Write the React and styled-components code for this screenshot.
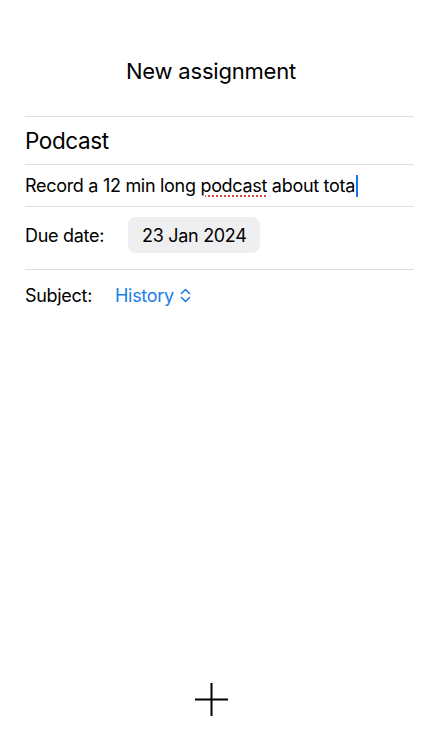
import styled, { createGlobalStyle } from "styled-components";

const GlobalStyle = createGlobalStyle`
    html, body {
        margin: 0;
        padding: 0;
        background: #ffffff;
    }
    body {
        font-family: Inter, "Liberation Sans", sans-serif;
        color: #000000;
    }
`;

const Page = styled.div`
    display: flex;
    flex-direction: column;
    height: 100vh;
    box-sizing: border-box;
`;

const Title = styled.h1`
    margin: 0;
    padding-top: 56px;
    padding-bottom: 30px;
    font-size: 22px;
    line-height: 30px;
    font-weight: 400;
    text-align: center;
    letter-spacing: -0.2px;
`;

const Form = styled.div`
    display: flex;
    flex-direction: column;
    margin: 0 8px 0 25px;
`;

const Divider = styled.div`
    height: 1px;
    background: #dedee0;
`;

const Row = styled.div`
    display: flex;
    align-items: center;
    min-height: ${(props) => props.height}px;
    padding: ${(props) => props.pad || "0"};
    box-sizing: border-box;
    font-size: ${(props) => props.size || 18}px;
    letter-spacing: ${(props) => props.spacing || "-0.3px"};
`;

const Label = styled.span`
    width: ${(props) => props.width}px;
    flex-shrink: 0;
`;

const Misspelled = styled.span`
    text-decoration: underline dotted #e0443a;
    text-decoration-thickness: 2px;
    text-underline-offset: 4px;
`;

const Caret = styled.span`
    display: inline-block;
    width: 2px;
    height: 22px;
    background: #1a73e8;
    vertical-align: -5px;
    margin-left: 1px;
`;

const DatePill = styled.span`
    display: inline-flex;
    align-items: center;
    height: 36px;
    padding: 0 13px 0 14px;
    border-radius: 8px;
    background: #efeff1;
`;

const Picker = styled.span`
    display: inline-flex;
    align-items: center;
    gap: 6px;
    color: #1a7ee6;
`;

const Footer = styled.div`
    margin-top: auto;
    display: flex;
    justify-content: center;
    padding-bottom: 34px;
`;

const AddButton = styled.button`
    border: none;
    background: none;
    padding: 0;
    width: 33px;
    height: 33px;
    cursor: pointer;
`;

const App = () => {
    return (
        <>
            <GlobalStyle />
            <Page>
                <Title>New assignment</Title>
                <Form>
                    <Divider />
                    <Row height={47} size={22.5} spacing="-0.4px">Podcast</Row>
                    <Divider />
                    <Row height={41}>
                        <span>
                            Record a 12 min long <Misspelled>podcast</Misspelled> about tota<Caret />
                        </span>
                    </Row>
                    <Divider />
                    <Row height={62} pad="10px 0 16px">
                        <Label width={103}>Due date:</Label>
                        <DatePill>23 Jan 2024</DatePill>
                    </Row>
                    <Divider />
                    <Row height={50}>
                        <Label width={90}>Subject:</Label>
                        <Picker>
                            History
                            <svg width="11" height="15" viewBox="0 0 11 15" fill="none" stroke="currentColor" strokeWidth="1.6" strokeLinecap="round" strokeLinejoin="round">
                                <path d="M1.5 5.5 L5.5 1.5 L9.5 5.5" />
                                <path d="M1.5 9.5 L5.5 13.5 L9.5 9.5" />
                            </svg>
                        </Picker>
                    </Row>
                </Form>
                <Footer>
                    <AddButton aria-label="Add">
                        <svg width="33" height="33" viewBox="0 0 33 33" stroke="#000" strokeWidth="2">
                            <path d="M16.5 0 V33 M0 16.5 H33" />
                        </svg>
                    </AddButton>
                </Footer>
            </Page>
        </>
    );
};

export default App;
